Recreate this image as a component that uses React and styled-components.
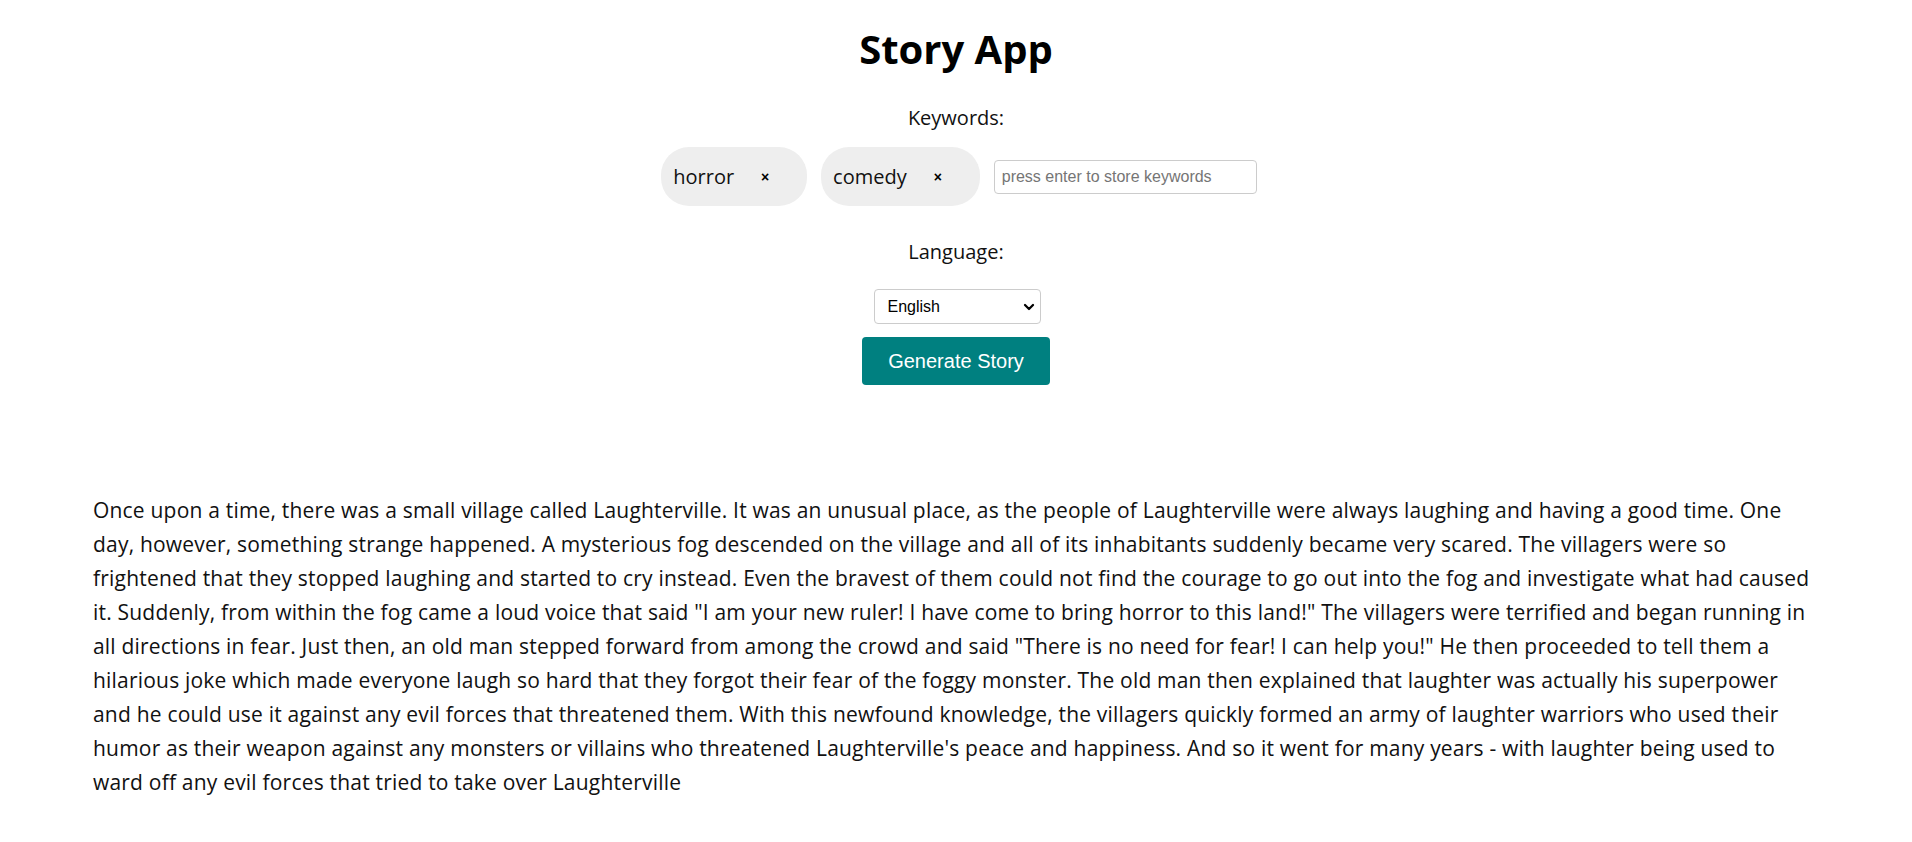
import { useState } from "react"
import styled, { createGlobalStyle } from "styled-components"
import { ChevronDown } from "lucide-react"

const GlobalStyle = createGlobalStyle`
  body {
    margin: 0;
    background: #fff;
    font-family: "Open Sans", "Noto Sans", sans-serif;
    color: #111;
  }
`

const STORY = `Once upon a time, there was a small village called Laughterville. It was an unusual place, as the people of Laughterville were always laughing and having a good time. One day, however, something strange happened. A mysterious fog descended on the village and all of its inhabitants suddenly became very scared. The villagers were so frightened that they stopped laughing and started to cry instead. Even the bravest of them could not find the courage to go out into the fog and investigate what had caused it. Suddenly, from within the fog came a loud voice that said "I am your new ruler! I have come to bring horror to this land!" The villagers were terrified and began running in all directions in fear. Just then, an old man stepped forward from among the crowd and said "There is no need for fear! I can help you!" He then proceeded to tell them a hilarious joke which made everyone laugh so hard that they forgot their fear of the foggy monster. The old man then explained that laughter was actually his superpower and he could use it against any evil forces that threatened them. With this newfound knowledge, the villagers quickly formed an army of laughter warriors who used their humor as their weapon against any monsters or villains who threatened Laughterville's peace and happiness. And so it went for many years - with laughter being used to ward off any evil forces that tried to take over Laughterville`

const Page = styled.div`
  display: flex;
  flex-direction: column;
  align-items: center;
  padding-top: 25px;
`

const Title = styled.h1`
  margin: 0;
  font-size: 40px;
  line-height: 48px;
  font-weight: 700;
  color: #000;
`

const Label = styled.div`
  margin-top: ${p => p.$top}px;
  font-size: 20px;
  line-height: 28px;
`

const KeywordRow = styled.div`
  display: flex;
  align-items: center;
  gap: 14px;
  margin-top: 15px;
  margin-left: 6px;
`

const Tag = styled.div`
  display: flex;
  align-items: center;
  height: 59px;
  padding: 0 0 0 12px;
  border-radius: 28px;
  background: #eeeeee;
  font-size: 20px;
`

const Remove = styled.button`
  display: flex;
  align-items: center;
  justify-content: center;
  width: 22px;
  height: 22px;
  margin: 0 31px 0 20px;
  padding: 0;
  border: none;
  background: transparent;
  font-size: 14px;
  font-weight: 700;
  color: #000;
  cursor: pointer;
`

const KeywordInput = styled.input`
  box-sizing: border-box;
  width: 263px;
  height: 34px;
  padding: 0 7px;
  border: 1px solid #ccc;
  border-radius: 4px;
  font-family: "Liberation Sans", Arial, sans-serif;
  font-size: 16px;
  &::placeholder {
    color: #757575;
  }
`

const SelectWrap = styled.div`
  position: relative;
  margin-top: 23px;
  margin-left: 2px;
`

const LanguageSelect = styled.select`
  box-sizing: border-box;
  width: 167px;
  height: 35px;
  padding: 0 24px 0 13px;
  border: 1px solid #ccc;
  border-radius: 4px;
  background: #fff;
  appearance: none;
  font-family: "Liberation Sans", Arial, sans-serif;
  font-size: 16px;
  color: #000;
`

const Chevron = styled(ChevronDown)`
  position: absolute;
  right: 4px;
  top: 10px;
  width: 16px;
  height: 16px;
  stroke-width: 3.4;
  color: #000;
  pointer-events: none;
`

const GenerateButton = styled.button`
  height: 48px;
  margin-top: 13px;
  padding: 0 26px;
  border: none;
  border-radius: 4px;
  background: #008080;
  color: #fff;
  font-family: "Liberation Sans", Arial, sans-serif;
  font-size: 20px;
  cursor: pointer;
`

const Story = styled.p`
  align-self: stretch;
  margin: 108px 0 0;
  padding: 0 92px 0 93px;
  font-size: 21px;
  letter-spacing: 0.2px;
  line-height: 34px;
  color: #111;
`

export default function App() {
  const [keywords, setKeywords] = useState(["horror", "comedy"])
  const [draft, setDraft] = useState("")
  const [language, setLanguage] = useState("English")

  function addKeyword(e) {
    if (e.key === "Enter" && draft.trim()) {
      setKeywords([...keywords, draft.trim()])
      setDraft("")
    }
  }

  return (
    <Page>
      <GlobalStyle />
      <Title>Story App</Title>
      <Label $top={31}>Keywords:</Label>
      <KeywordRow>
        {keywords.map(k => (
          <Tag key={k}>
            {k}
            <Remove onClick={() => setKeywords(keywords.filter(x => x !== k))}>×</Remove>
          </Tag>
        ))}
        <KeywordInput
          placeholder="press enter to store keywords"
          value={draft}
          onChange={e => setDraft(e.target.value)}
          onKeyDown={addKeyword}
        />
      </KeywordRow>
      <Label $top={32}>Language:</Label>
      <SelectWrap>
        <LanguageSelect value={language} onChange={e => setLanguage(e.target.value)}>
          <option>English</option>
          <option>Spanish</option>
          <option>French</option>
          <option>German</option>
        </LanguageSelect>
        <Chevron />
      </SelectWrap>
      <GenerateButton>Generate Story</GenerateButton>
      <Story>{STORY}</Story>
    </Page>
  )
}
